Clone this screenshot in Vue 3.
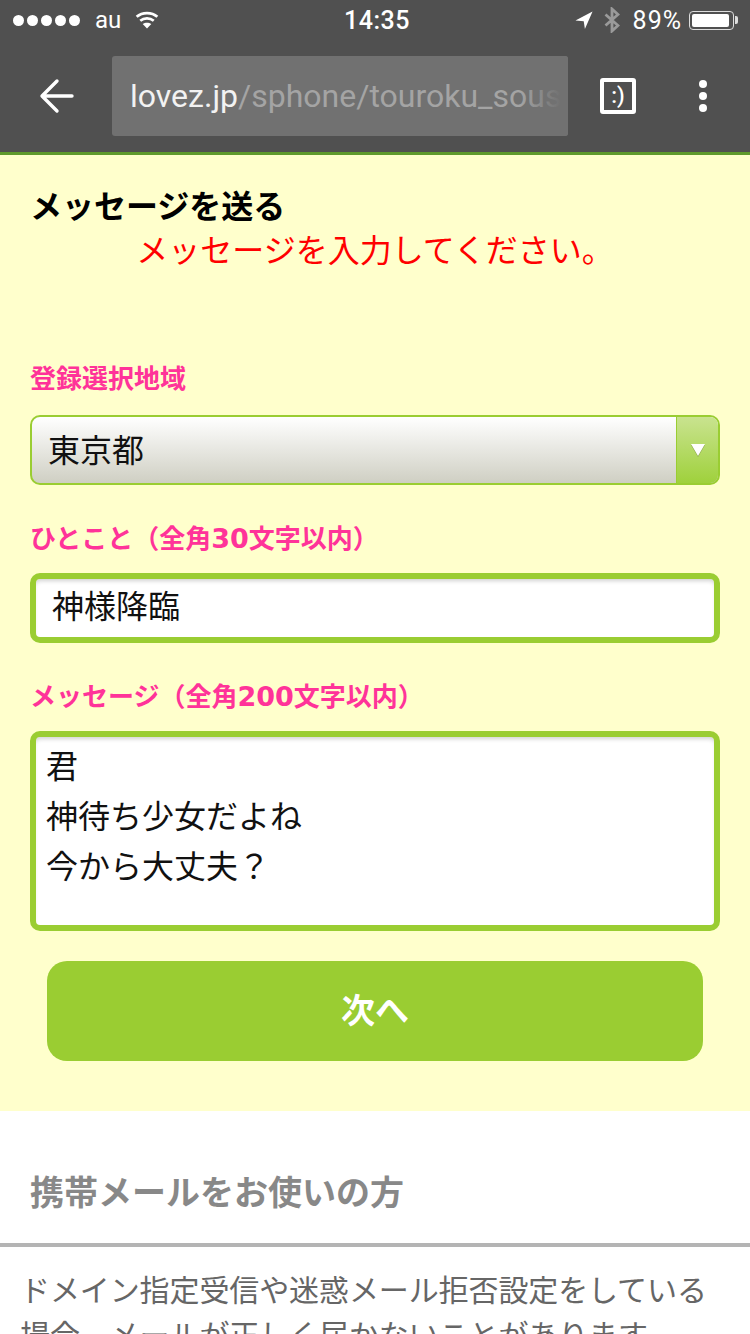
<template>
  <div class="phone">
    <header class="chrome">
      <div class="status">
        <div class="status-left">
          <div class="dots"><i v-for="n in 5" :key="n"></i></div>
          <span class="carrier">au</span>
          <svg class="wifi" width="24" height="18" viewBox="0 0 26 20" fill="none" stroke="#fff" stroke-width="3">
            <path d="M1.500 6.500C7.800.9 18.200.9 24.500 6.500" />
            <path d="M5.500 10.800C9.800 7.200 16.200 7.200 20.500 10.800" />
            <path d="M13 19.500l-4.800-5c2.800-2 6.800-2 9.600 0z" fill="#fff" stroke="none" />
          </svg>
        </div>
        <span class="time">14:35</span>
        <div class="status-right">
          <svg class="arrow" width="18" height="18" viewBox="0 0 20 20"><path d="M19.500.5L.5 10.500l9.200.8 1.300 8.700z" fill="#fff" /></svg>
          <svg class="bt" width="16" height="26" viewBox="0 0 16 26" fill="none" stroke="#9a9a9a" stroke-width="2.800"><path d="M1.500 7.500L14 18.500 8 24V2l6 5.500L1.500 18.500" /></svg>
          <span class="battery-pct">89%</span>
          <div class="battery"><div class="battery-fill"></div></div>
          <div class="battery-tip"></div>
        </div>
      </div>
      <div class="toolbar">
        <svg class="back" width="36" height="36" viewBox="0 0 36 36" fill="none" stroke="#fff" stroke-width="3.400" stroke-linecap="round" stroke-linejoin="round">
          <path d="M33 18H4M18 3L3 18l15 15" />
        </svg>
        <div class="url"><span class="host">lovez.jp</span><span class="path">/sphone/touroku_sousin</span></div>
        <div class="smile">:)</div>
        <div class="menu"><i v-for="n in 3" :key="n"></i></div>
      </div>
    </header>

    <main class="form-area">
      <h1 class="title">メッセージを送る</h1>
      <p class="error">メッセージを入力してください。</p>

      <label class="label label-first">登録選択地域</label>
      <div class="select">
        <span class="select-value">東京都</span>
        <div class="select-arrow"><span class="triangle"></span></div>
      </div>

      <label class="label">ひとこと（全角<span class="num">30</span>文字以内）</label>
      <div class="field field-single">{{ oneLine }}</div>

      <label class="label">メッセージ（全角<span class="num">200</span>文字以内）</label>
      <div class="field field-multi">
        <div v-for="line in messageLines" :key="line">{{ line }}</div>
      </div>

      <button class="next">次へ</button>
    </main>

    <section class="notice">
      <h2 class="notice-title">携帯メールをお使いの方</h2>
      <p class="notice-text">ドメイン指定受信や迷惑メール拒否設定をしている場合、メールが正しく届かないことがあります。</p>
    </section>
  </div>
</template>

<script setup>
const oneLine = '神様降臨'
const messageLines = ['君', '神待ち少女だよね', '今から大丈夫？']
</script>

<style>
html, body { margin: 0; background: #fff; }
</style>

<style scoped>
.phone {
  width: 750px;
  height: 1334px;
  overflow: hidden;
  font-family: "Noto Sans CJK JP", "Noto Sans", sans-serif;
  background: #fff;
}

.chrome { background: #505050; height: 152px; border-bottom: 3px solid #5f9a2c; }
.status {
  height: 40px;
  padding: 0 12px 0 13px;
  display: flex;
  align-items: center;
  justify-content: space-between;
  color: #fff;
  position: relative;
}
.status-left { display: flex; align-items: center; }
.dots { display: flex; gap: 3px; }
.dots i { width: 11px; height: 11px; background: #fff; border-radius: 50%; }
.carrier { font-family: Roboto, sans-serif; font-size: 24px; margin-left: 15px; margin-right: 14px; }
.time {
  position: absolute;
  left: 344px;
  font-family: Roboto, sans-serif;
  font-size: 25px;
  font-weight: 500;
  letter-spacing: 0.5px;
}
.status-right { display: flex; align-items: center; }
.bt { margin-left: 11px; }
.battery-pct { font-family: Roboto, sans-serif; font-size: 25px; margin-left: 13px; letter-spacing: 1px; }
.battery {
  width: 45px;
  height: 19px;
  margin-left: 7px;
  border: 1px solid #ddd;
  border-radius: 4px;
  padding: 2px;
  box-sizing: border-box;
}
.battery-fill { width: 37px; height: 100%; background: #fff; border-radius: 2px; }
.battery-tip { width: 3px; height: 8px; margin-left: 1px; background: #ddd; border-radius: 0 2px 2px 0; }

.toolbar { height: 112px; display: flex; align-items: center; }
.back { margin-left: 39px; }
.url {
  width: 456px;
  height: 80px;
  margin-left: 37px;
  padding-left: 18px;
  box-sizing: border-box;
  background: #717171;
  border-radius: 3px;
  font-family: Roboto, sans-serif;
  font-size: 32px;
  line-height: 80px;
  white-space: nowrap;
  overflow: hidden;
  position: relative;
}
.url::after {
  content: "";
  position: absolute;
  right: 0;
  top: 0;
  bottom: 0;
  width: 48px;
  background: linear-gradient(to right, rgba(113,113,113,0), #717171 85%);
}
.host { color: #f2f2f2; }
.path { color: #a4a4a4; }
.smile {
  width: 36px;
  height: 36px;
  box-sizing: border-box;
  margin-left: 32px;
  border: 4px solid #fff;
  border-radius: 3px;
  color: #fff;
  font-family: Roboto, sans-serif;
  font-size: 22px;
  font-weight: 500;
  line-height: 27px;
  text-align: center;
}
.menu { margin-left: 63px; display: flex; flex-direction: column; gap: 4px; }
.menu i { width: 8px; height: 8px; background: #fff; border-radius: 50%; }

.form-area {
  height: 956px;
  padding: 0 30px;
  box-sizing: border-box;
  background: #ffffcc;
  overflow: hidden;
}
.title {
  margin: 0;
  padding-top: 29px;
  font-size: 32px;
  font-weight: 700;
  line-height: 40px;
  color: #000;
}
.error {
  margin: 3px 0 0;
  font-size: 32px;
  line-height: 42px;
  color: #ff0000;
  text-align: center;
}
.label {
  display: block;
  margin: 34px 0 0;
  height: 36px;
  font-size: 26px;
  font-weight: 700;
  line-height: 35px;
  color: #ff3399;
}
.label-first { margin-top: 90px; }
.num { font-family: "DejaVu Sans", sans-serif; font-size: 27px; }

.select {
  margin-top: 20px;
  height: 70px;
  box-sizing: border-box;
  border: 2px solid #9acd32;
  border-radius: 10px;
  background: linear-gradient(#ffffff, #cfcfc3);
  display: flex;
  justify-content: space-between;
  overflow: hidden;
}
.select-value { padding-left: 16px; font-size: 32px; line-height: 62px; color: #111; }
.select-arrow {
  width: 41px;
  background: linear-gradient(#c9e38f, #9fd13c);
  border-left: 1px solid #9acd32;
  display: flex;
  align-items: center;
  justify-content: center;
}
.triangle {
  width: 0;
  height: 0;
  border-left: 7px solid transparent;
  border-right: 7px solid transparent;
  border-top: 12px solid #fff;
  filter: drop-shadow(0 1px 0 rgba(90, 110, 40, 0.5));
}

.field {
  box-sizing: border-box;
  border: 6px solid #9acd32;
  border-radius: 10px;
  background: #fff;
  box-shadow: inset 0 4px 4px -2px rgba(0, 0, 0, 0.18);
  font-size: 32px;
  color: #111;
}
.field-single { margin-top: 18px; height: 70px; padding-left: 16px; line-height: 50px; }
.field-multi { margin-top: 18px; height: 200px; padding: 2px 0 0 10px; line-height: 50px; }

.next {
  display: block;
  width: 656px;
  height: 100px;
  margin: 30px 0 0 17px;
  padding: 0 0 6px;
  border: none;
  border-radius: 20px;
  background: #9acd32;
  color: #fff;
  font-family: inherit;
  font-size: 34px;
  font-weight: 700;
}

.notice-title {
  margin: 0;
  height: 136px;
  box-sizing: border-box;
  padding: 57px 0 0 30px;
  border-bottom: 4px solid #b4b4b4;
  font-size: 34px;
  font-weight: 700;
  line-height: 46px;
  color: #888;
}
.notice-text {
  margin: 0;
  padding: 19px 30px 0 20px;
  font-size: 30px;
  letter-spacing: -0.1px;
  line-height: 45px;
  color: #666;
}
</style>
